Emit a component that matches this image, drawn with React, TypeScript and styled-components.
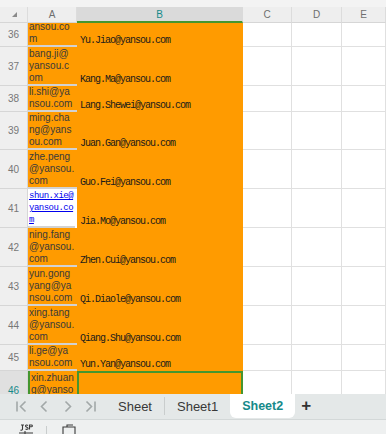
import styled, { createGlobalStyle, css } from 'styled-components';

const GlobalStyle = createGlobalStyle`
  html, body {
    margin: 0;
    padding: 0;
    overflow: hidden;
    background: #ffffff;
  }
  * {
    box-sizing: border-box;
  }
`;

const COLS = '28px 49px 166px 49px 50px 1fr';
const ORANGE = '#ff9b00';
const GREEN = '#45962f';
const TEAL = '#168a8a';

const Page = styled.div`
  width: 386px;
  height: 434px;
  display: flex;
  flex-direction: column;
  font-family: 'Liberation Sans', Arial, sans-serif;
  background: #ffffff;
`;

const Sheet = styled.div`
  height: 394px;
  overflow: hidden;
  display: flex;
  flex-direction: column;
`;

const TopStrip = styled.div`
  height: 7px;
  flex: none;
  background: #f3f3f3;
`;

const HeaderRow = styled.div`
  display: grid;
  grid-template-columns: ${COLS};
  height: 16px;
  flex: none;
  background: #eeeeee;
`;

const ColHead = styled.div<{ $active?: boolean }>`
  display: flex;
  align-items: center;
  justify-content: center;
  font-size: 10px;
  color: #6e6e6e;
  border-right: 1px solid #dcdcdc;
  border-bottom: 1px solid #d6d6d6;
  ${(p) =>
    p.$active &&
    css`
      background: #dadada;
      color: ${TEAL};
      border-right-color: #dadada;
      border-bottom: 2px solid ${GREEN};
    `}
`;

const Corner = styled.div`
  position: relative;
  border-right: 1px solid #dcdcdc;
  border-bottom: 1px solid #d6d6d6;

  &::after {
    content: '';
    position: absolute;
    left: 12px;
    top: 5px;
    width: 0;
    height: 0;
    border-left: 5px solid transparent;
    border-bottom: 5px solid #8a8a8a;
  }
`;

const Row = styled.div<{ $h: number }>`
  display: grid;
  grid-template-columns: ${COLS};
  height: ${(p) => p.$h}px;
  flex: none;
`;

const RowHead = styled.div<{ $active?: boolean }>`
  display: flex;
  align-items: center;
  justify-content: center;
  font-size: 10px;
  color: #777777;
  background: ${(p) => (p.$active ? '#e0e0e0' : '#efefef')};
  ${(p) => p.$active && `color: ${TEAL};`}
  border-right: 1px solid #d6d6d6;
  border-bottom: 1px solid #d6d6d6;
`;

const ACell = styled.div<{ $link?: boolean; $sel?: boolean }>`
  display: flex;
  flex-direction: column;
  justify-content: flex-end;
  overflow: hidden;
  padding: 0 0 0 1px;
  background: ${(p) => (p.$link ? '#ffffff' : ORANGE)};
  border-bottom: 2px solid #d2d2d2;
  font-size: 10px;
  line-height: 12px;
  color: #3a3a3a;
  white-space: nowrap;
  ${(p) =>
    p.$link &&
    css`
      font-family: 'Liberation Mono', 'DejaVu Sans Mono', monospace;
      font-size: 9px;
      letter-spacing: -0.5px;
      color: #0000ee;
      text-decoration: underline;
      margin-right: 2px;
    `}
  ${(p) =>
    p.$sel &&
    css`
      border-left: 2px solid ${GREEN};
      border-bottom: none;
      justify-content: flex-start;
      padding-top: 1px;
    `}
`;

const Line = styled.span`
  display: block;
`;

const BCell = styled.div<{ $sel?: boolean }>`
  display: flex;
  align-items: flex-end;
  padding: 0 0 1px 3px;
  background: ${ORANGE};
  font-family: 'Liberation Mono', 'DejaVu Sans Mono', monospace;
  font-size: 10px;
  letter-spacing: -1px;
  line-height: 11px;
  color: #1a1a1a;
  white-space: nowrap;
  ${(p) =>
    p.$sel &&
    css`
      border: 2px solid ${GREEN};
      border-bottom: none;
    `}
`;

const Cell = styled.div`
  background: #ffffff;
  border-right: 1px solid #e0e0e0;
  border-bottom: 1px solid #e0e0e0;
`;

const TabBar = styled.div`
  height: 26px;
  flex: none;
  display: flex;
  align-items: flex-start;
  background: #e4e8e8;
  border-bottom: 1px solid #d3d8d8;
`;

const NavGroup = styled.div`
  display: flex;
  align-items: center;
  height: 24px;
  gap: 10px;
  padding-left: 15px;
  width: 106px;
`;

const NavIcon = styled.svg`
  width: 13px;
  height: 13px;
  stroke: #a2a8a8;
  stroke-width: 1.6;
  fill: none;
`;

const Tab = styled.div<{ $active?: boolean }>`
  height: 24px;
  display: flex;
  align-items: center;
  padding: 0 12px;
  font-size: 13px;
  color: #383838;
  ${(p) =>
    p.$active &&
    css`
      background: #ffffff;
      border-radius: 0 0 6px 6px;
      color: ${TEAL};
      font-weight: 700;
      font-size: 12.5px;
    `}
`;

const TabSep = styled.div`
  width: 1px;
  height: 18px;
  margin-top: 3px;
  background: #c9cdcd;
`;

const AddTab = styled.div`
  height: 24px;
  display: flex;
  align-items: center;
  padding-left: 6px;
  font-size: 17px;
  font-weight: 700;
  color: #333333;
`;

const StatusBar = styled.div`
  flex: 1;
  display: flex;
  align-items: flex-start;
  background: #eef0f0;
  padding: 4px 0 0 18px;
  overflow: hidden;
`;

const StatusSep = styled.div`
  width: 1px;
  height: 12px;
  margin: 2px 14px 0 12px;
  background: #c9cdcd;
`;

const StatusIcon = styled.svg`
  width: 16px;
  height: 12px;
  stroke: #3a3a3a;
  stroke-width: 1.1;
  fill: none;
`;

type RowData = {
  n: number;
  h: number;
  a: string[];
  b: string;
  link?: boolean;
  sel?: boolean;
};

const rows: RowData[] = [
  { n: 36, h: 24, a: ['ansou.co', 'm'], b: 'Yu.Jiao@yansou.com' },
  { n: 37, h: 39, a: ['bang.ji@', 'yansou.c', 'om'], b: 'Kang.Ma@yansou.com' },
  { n: 38, h: 26, a: ['li.shi@ya', 'nsou.com'], b: 'Lang.Shewei@yansou.com' },
  { n: 39, h: 38, a: ['ming.cha', 'ng@yans', 'ou.com'], b: 'Juan.Gan@yansou.com' },
  { n: 40, h: 39, a: ['zhe.peng', '@yansou.', 'com'], b: 'Guo.Fei@yansou.com' },
  { n: 41, h: 39, a: ['shun.xie@', 'yansou.co', 'm'], b: 'Jia.Mo@yansou.com', link: true },
  { n: 42, h: 39, a: ['ning.fang', '@yansou.', 'com'], b: 'Zhen.Cui@yansou.com' },
  { n: 43, h: 39, a: ['yun.gong', 'yang@ya', 'nsou.com'], b: 'Qi.Diaole@yansou.com' },
  { n: 44, h: 39, a: ['xing.tang', '@yansou.', 'com'], b: 'Qiang.Shu@yansou.com' },
  { n: 45, h: 26, a: ['li.ge@ya', 'nsou.com'], b: 'Yun.Yan@yansou.com' },
  { n: 46, h: 39, a: ['xin.zhuan', 'g@yanso', 'u.com'], b: '', sel: true },
];

const App = () => {
  return (
    <Page>
      <GlobalStyle />
      <Sheet>
        <TopStrip />
        <HeaderRow>
          <Corner />
          <ColHead>A</ColHead>
          <ColHead $active>B</ColHead>
          <ColHead>C</ColHead>
          <ColHead>D</ColHead>
          <ColHead>E</ColHead>
        </HeaderRow>
        {rows.map((r) => (
          <Row key={r.n} $h={r.h}>
            <RowHead $active={r.sel}>{r.n}</RowHead>
            <ACell $link={r.link} $sel={r.sel}>
              {r.a.map((l) => (
                <Line key={l}>{l}</Line>
              ))}
            </ACell>
            <BCell $sel={r.sel}>{r.b}</BCell>
            <Cell />
            <Cell />
            <Cell />
          </Row>
        ))}
      </Sheet>

      <TabBar>
        <NavGroup>
          <NavIcon viewBox="0 0 13 13">
            <path d="M2 1.5v10M10.5 1.5 5.5 6.5l5 5" />
          </NavIcon>
          <NavIcon viewBox="0 0 13 13">
            <path d="M8.5 1.5 3.5 6.5l5 5" />
          </NavIcon>
          <NavIcon viewBox="0 0 13 13">
            <path d="M4.5 1.5 9.5 6.5l-5 5" />
          </NavIcon>
          <NavIcon viewBox="0 0 13 13">
            <path d="M2.5 1.5 7.5 6.5l-5 5M11 1.5v10" />
          </NavIcon>
        </NavGroup>
        <Tab>Sheet</Tab>
        <TabSep />
        <Tab>Sheet1</Tab>
        <Tab $active>Sheet2</Tab>
        <AddTab>+</AddTab>
      </TabBar>

      <StatusBar>
        <StatusIcon viewBox="0 0 16 12">
          <path d="M3 1h3M4.5 1v4c0 1-1 1.5-2 1" />
          <path d="M10 1.5c-1-.8-2.5-.5-2.5.6 0 1.3 2.6 1 2.6 2.3 0 1-1.5 1.2-2.6.6" />
          <path d="M11.5 5.5V1h2c1 0 1.3 1.8 0 1.8h-2" />
          <path d="M7 7v5M1 9h14" />
        </StatusIcon>
        <StatusSep />
        <StatusIcon viewBox="0 0 16 12">
          <path d="M2 12V3h12v9" />
          <path d="M6 3V1h6" />
        </StatusIcon>
      </StatusBar>
    </Page>
  );
};

export default App;
